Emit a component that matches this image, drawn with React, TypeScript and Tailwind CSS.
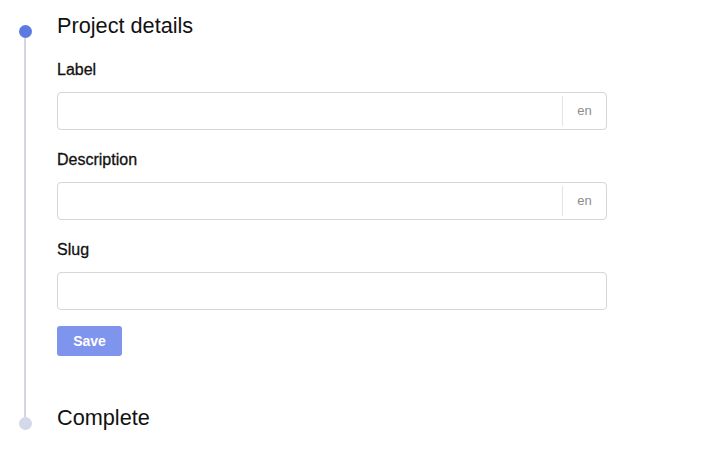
import React from "react";

const font = { fontFamily: '"Liberation Sans", Arial, sans-serif' };

function Field({ label, addon }: { label: string; addon?: string }) {
  return (
    <div className="flex flex-col">
      <label className="text-[16px] leading-[24px] text-[#111] [-webkit-text-stroke:0.3px_#111]">{label}</label>
      <div className="mt-[10px] flex h-[38px] w-[550px] items-stretch rounded-[4px] border border-[#d6d6d6] bg-white">
        <input className="min-w-0 flex-1 bg-transparent px-3 text-[14px] outline-none" />
        {addon && (
          <div className="flex items-center py-[3px]">
            <div className="flex h-full w-[44px] items-center justify-center border-l border-[#e3e3e3] text-[13px] text-[#8c8c8c]">
              {addon}
            </div>
          </div>
        )}
      </div>
    </div>
  );
}

export default function App() {
  return (
    <div className="min-h-[461px] w-full bg-white pt-[12px]" style={font}>
      <div className="flex">
        <div className="flex w-[50px] flex-col items-center">
          <div className="mt-[13px] h-[13px] w-[13px] rounded-full bg-[#5b7be1]" />
          <div className="w-[2px] flex-1 bg-[#d3d6e9]" />
        </div>
        <div className="flex flex-col pb-[48px] pl-[7px]">
          <h2 className="text-[21.7px] leading-[28px] text-[#111]">Project details</h2>
          <div className="mt-[18px] flex flex-col gap-[18px]">
            <Field label="Label" addon="en" />
            <Field label="Description" addon="en" />
            <Field label="Slug" />
          </div>
          <div className="mt-[16px]">
            <button className="h-[30px] w-[65px] rounded-[3px] bg-[#7f94ed] text-[14px] font-bold text-white">
              Save
            </button>
          </div>
        </div>
      </div>
      <div className="flex">
        <div className="flex w-[50px] flex-col items-center">
          <div className="h-[13px] w-[2px] bg-[#d3d6e9]" />
          <div className="h-[13px] w-[13px] rounded-full bg-[#d5d8e6]" />
        </div>
        <div className="pl-[7px]">
          <h2 className="text-[21.7px] leading-[28px] text-[#111]">Complete</h2>
        </div>
      </div>
    </div>
  );
}
